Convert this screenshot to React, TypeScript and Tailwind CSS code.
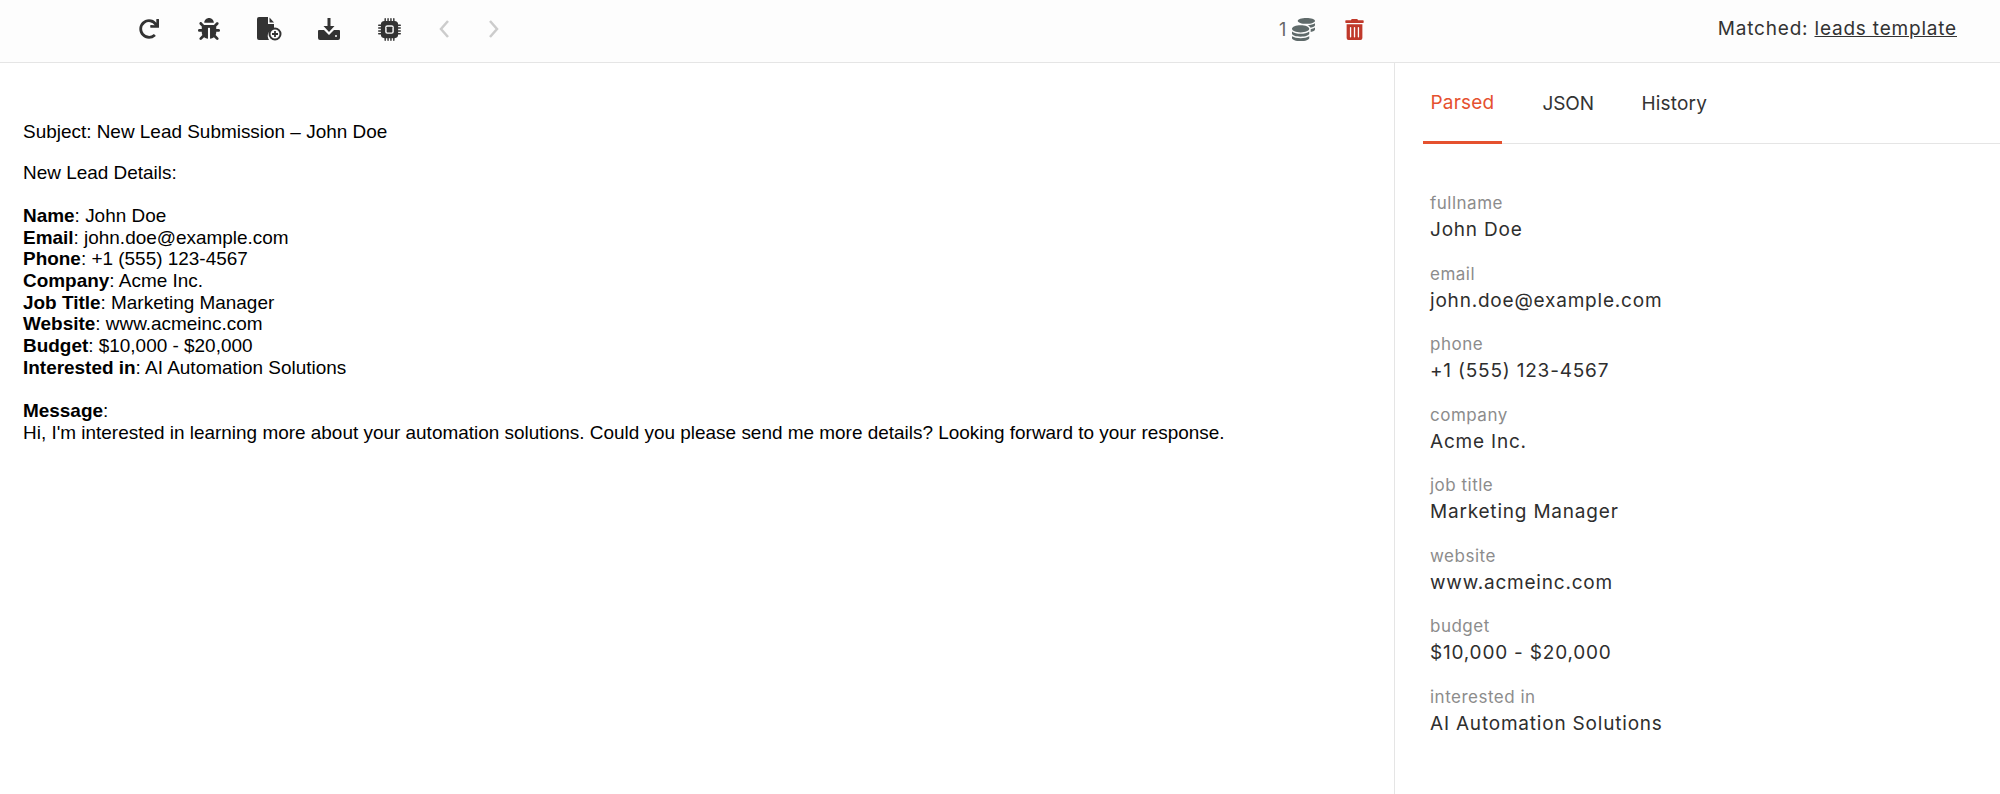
import { FaBug, FaCoins, FaTrashAlt, FaRedo } from "react-icons/fa";
import { BsCpuFill } from "react-icons/bs";

const fields = [
  ["fullname", "John Doe"],
  ["email", "john.doe@example.com"],
  ["phone", "+1 (555) 123-4567"],
  ["company", "Acme Inc."],
  ["job title", "Marketing Manager"],
  ["website", "www.acmeinc.com"],
  ["budget", "$10,000 - $20,000"],
  ["interested in", "AI Automation Solutions"],
];

const details = [
  ["Name", "John Doe"],
  ["Email", "john.doe@example.com"],
  ["Phone", "+1 (555) 123-4567"],
  ["Company", "Acme Inc."],
  ["Job Title", "Marketing Manager"],
  ["Website", "www.acmeinc.com"],
  ["Budget", "$10,000 - $20,000"],
  ["Interested in", "AI Automation Solutions"],
];

function ToolButton({ children, wide = true }: { children: React.ReactNode; wide?: boolean }) {
  return (
    <button className={`flex items-center justify-center h-full ${wide ? "w-[60px]" : "w-[50px]"}`}>
      {children}
    </button>
  );
}

function App() {
  return (
    <div className="h-[794px] flex flex-col bg-white font-['Inter',sans-serif] overflow-hidden">
      {/* toolbar */}
      <div className="flex items-center h-[63px] border-b border-[#e5e5e5] pl-[119px] pr-[43px] pb-[4px] bg-[#fdfdfd] text-[#333]">
        <ToolButton><FaRedo size={20} /></ToolButton>
        <ToolButton><FaBug size={22} /></ToolButton>
        <ToolButton>
          <svg width="26" height="24" viewBox="0 0 26 24">
            <path d="M1 2a2 2 0 0 1 2-2h9v7h6v5a7 7 0 0 0-5 11H3a2 2 0 0 1-2-2z" fill="#333" />
            <path d="M13.500 0.500 18 5.500h-4.500z" fill="#333" />
            <circle cx="19" cy="17" r="5.500" fill="none" stroke="#333" strokeWidth="2" />
            <path d="M19 14v6M16 17h6" stroke="#333" strokeWidth="1.800" />
          </svg>
        </ToolButton>
        <ToolButton>
          <svg width="24" height="24" viewBox="0 0 24 24" fill="#333">
            <path d="M10.500 1h3v8h4L12 15 6.500 9h4z" />
            <path d="M2 13h5l5 5 5-5h5a1 1 0 0 1 1 1v7a2 2 0 0 1-2 2H3a2 2 0 0 1-2-2v-7a1 1 0 0 1 1-1z" />
            <circle cx="19" cy="19" r="1" fill="#fff" />
          </svg>
        </ToolButton>
        <ToolButton><BsCpuFill size={23} /></ToolButton>
        <ToolButton wide={false}>
          <svg width="10" height="18" viewBox="0 0 10 18" fill="none" stroke="#ccc" strokeWidth="2.500">
            <path d="M9 1 2 9l7 8" />
          </svg>
        </ToolButton>
        <ToolButton wide={false}>
          <svg width="10" height="18" viewBox="0 0 10 18" fill="none" stroke="#ccc" strokeWidth="2.500">
            <path d="M1 1l7 8-7 8" />
          </svg>
        </ToolButton>
        <div className="flex items-center ml-[760px] text-[#666]">
          <span className="text-[18px] mr-[6px]">1</span>
          <FaCoins size={23} className="text-[#5f6a6a]" />
        </div>
        <FaTrashAlt size={21} className="ml-[29px] text-[#c0392b]" />
        <div className="ml-auto text-[19px] tracking-[0.8px] text-[#333]">
          Matched: <span className="underline">leads template</span>
        </div>
      </div>

      <div className="flex flex-1 min-h-0">
        {/* email body */}
        <div className="w-[1395px] pl-[23px] pt-[58px] font-['Liberation_Sans',sans-serif] text-[18.950px] leading-[21.7px] text-black border-r border-[#e5e5e5]">
          <p className="mb-[19px]">Subject: New Lead Submission – John Doe</p>
          <p className="mb-[21.500px]">New Lead Details:</p>
          <div className="mb-[21.500px]">
            {details.map(([k, v]) => (
              <div key={k}><b>{k}</b>: {v}</div>
            ))}
          </div>
          <div><b>Message</b>:</div>
          <div>Hi, I'm interested in learning more about your automation solutions. Could you please send me more details? Looking forward to your response.</div>
        </div>

        {/* parsed panel */}
        <div className="flex-1 pl-[28px]">
          <div className="flex gap-[33.500px] h-[81px] border-b border-[#e5e5e5] text-[19px] tracking-[0.2px] text-[#333]">
            <div className="flex items-center px-[7.500px] pt-[2px] border-b-[3px] border-[#e5512f] text-[#e5512f] h-[81px]">Parsed</div>
            <div className="flex items-center px-[7px] pt-[2px] tracking-[-0.1px] h-[81px]">JSON</div>
            <div className="flex items-center px-[7px] pt-[2px] h-[81px]">History</div>
          </div>
          <div className="pl-[7px] pt-[47px]">
            {fields.map(([label, value]) => (
              <div key={label} className="mb-[17.500px]">
                <div className="text-[17px] leading-[25px] tracking-[0.5px] text-[#8c8c8c]">{label}</div>
                <div className="text-[19px] leading-[28px] tracking-[0.8px] text-[#2e2e2e]">{value}</div>
              </div>
            ))}
          </div>
        </div>
      </div>
    </div>
  );
}

export default App;
